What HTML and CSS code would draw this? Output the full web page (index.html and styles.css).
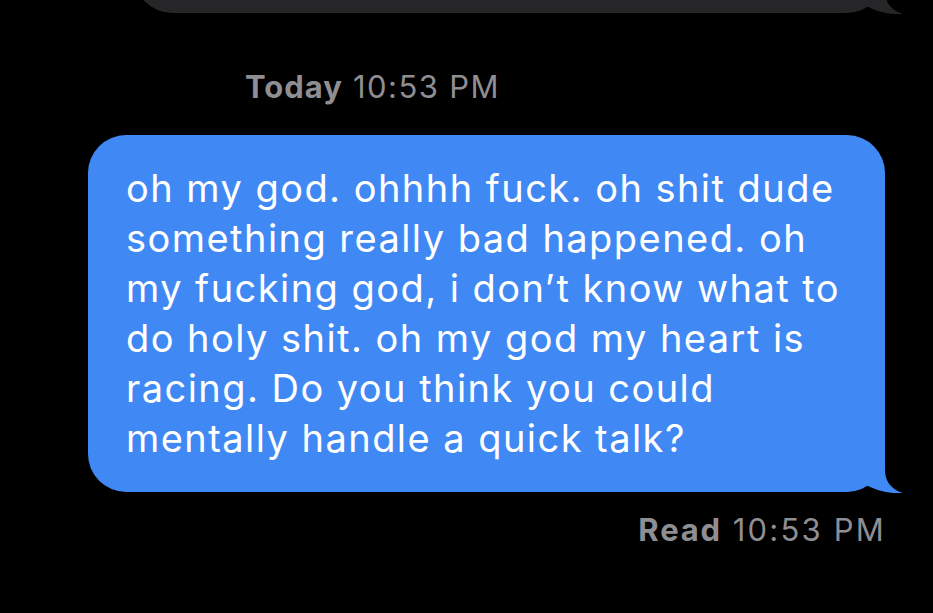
FILE: index.html
```html
<!DOCTYPE html>
<html lang="en">

<head>
    <meta charset="UTF-8">
    <meta name="viewport" content="width=device-width, initial-scale=1.0">
    <title>Messages</title>
    <link rel="stylesheet" href="styles.css">
</head>

<body>
    <div class="thread">
        <!-- previous message, scrolled mostly out of view -->
        <div class="peek">
            <div class="bubble bubble-gray">
                <svg class="tail" viewBox="0 0 60 40" width="60" height="40">
                    <path d="M0,0 L42,0 L42,17 C42,30 50,37 60,40 C48,41 32,38 20,30 C14,35 8,39 0,39 Z" />
                </svg>
            </div>
        </div>

        <div class="stamp stamp-day"><b>Today</b> 10:53 PM</div>

        <div class="row">
            <div class="bubble bubble-blue">
                <p class="bubble-text">oh my god. ohhhh fuck. oh shit dude<br>
                    something really bad happened. oh<br>
                    my fucking god, i don’t know what to<br>
                    do holy shit. oh my god my heart is<br>
                    racing. Do you think you could<br>
                    mentally handle a quick talk?</p>
                <svg class="tail" viewBox="0 0 60 40" width="60" height="40">
                    <path d="M0,0 L42,0 L42,17 C42,30 50,37 60,40 C48,41 32,38 20,30 C14,35 8,39 0,39 Z" />
                </svg>
            </div>
        </div>

        <div class="stamp stamp-read"><b>Read</b> 10:53 PM</div>
    </div>
</body>

</html>
```

FILE: styles.css
```css
html,
body {
    height: 100%;
}

body {
    margin: 0;
    background: #000;
    overflow: hidden;
    font-family: Inter, Roboto, "Liberation Sans", sans-serif;
}

.thread {
    display: flex;
    flex-direction: column;
}

.peek {
    height: 14px;
    overflow: hidden;
    display: flex;
    flex-direction: column;
    justify-content: flex-end;
    padding: 0 48px 0 134px;
}

.bubble {
    position: relative;
    border-radius: 38px;
}

.bubble .tail {
    position: absolute;
    right: -18px;
    bottom: -1px;
    display: block;
}

.bubble-gray {
    height: 80px;
    flex-shrink: 0;
    margin-bottom: 1px;
    background: #262628;
}

.bubble-gray .tail {
    fill: #262628;
}

.bubble-blue {
    background: #4088f4;
}

.bubble-blue .tail {
    fill: #4088f4;
}

.row {
    padding: 0 48px 0 88px;
    margin-top: 30px;
}

.bubble-text {
    margin: 0;
    padding: 28px 10px 29px 38px;
    color: #fff;
    font-size: 38px;
    line-height: 50px;
    letter-spacing: 1.45px;
}

.stamp {
    color: #8e8e93;
    font-size: 31px;
    line-height: 36px;
    letter-spacing: 1.4px;
}

.stamp b {
    font-weight: 700;
    letter-spacing: 1px;
}

.stamp-day {
    margin-top: 55px;
    padding-left: 245px;
}

.stamp-read {
    margin-top: 20px;
    padding-right: 47px;
    text-align: right;
    letter-spacing: 2.2px;
}

.stamp-read b {
    letter-spacing: 1.8px;
}
```
